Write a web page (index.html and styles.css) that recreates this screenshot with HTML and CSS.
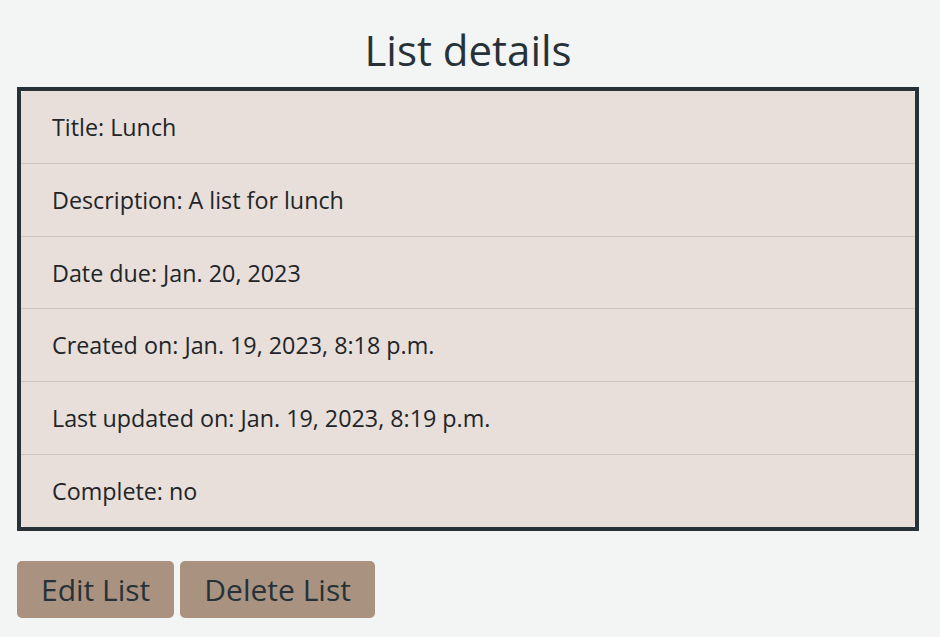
FILE: index.html
```html
<!DOCTYPE html>
<html lang="en">
<head>
<meta charset="utf-8">
<title>List details</title>
<link rel="stylesheet" href="styles.css">
</head>
<body>
<main class="page">
  <h1 class="page-title">List details</h1>
  <div class="details-frame">
    <ul class="details-list">
      <li class="details-item">Title: Lunch</li>
      <li class="details-item">Description: A list for lunch</li>
      <li class="details-item">Date due: Jan. 20, 2023</li>
      <li class="details-item">Created on: Jan. 19, 2023, 8:18 p.m.</li>
      <li class="details-item">Last updated on: Jan. 19, 2023, 8:19 p.m.</li>
      <li class="details-item">Complete: no</li>
    </ul>
  </div>
  <div class="actions">
    <a class="btn" href="#">Edit List</a>
    <a class="btn" href="#">Delete List</a>
  </div>
</main>
</body>
</html>
```

FILE: styles.css
```css
* { box-sizing: border-box; }

html, body {
  margin: 0;
  padding: 0;
  background: #f3f4f4;
}

body {
  font-family: "Open Sans", "Noto Sans", sans-serif;
  color: #212529;
}

.page {
  padding: 0 21px 0 17px;
}

.page-title {
  margin: 25px 0 13px;
  font-size: 42px;
  line-height: 49px;
  font-weight: 400;
  text-align: center;
  color: #263238;
}

.details-frame {
  border: 4px solid #263238;
}

.details-list {
  list-style: none;
  margin: 0;
  padding: 0;
  height: 436px;
  display: flex;
  flex-direction: column;
  background: #e8dfda;
  border-radius: 4px;
}

.details-item {
  flex: 1;
  display: flex;
  align-items: center;
  padding: 0 31px;
  font-size: 23.3px;
  line-height: 34px;
  border-top: 1px solid #cbc4bf;
}

.details-item:first-child {
  border-top: none;
}

.actions {
  display: flex;
  gap: 6px;
  margin-top: 30px;
}

.btn {
  display: block;
  height: 57px;
  line-height: 57px;
  padding: 0 24px;
  background: #a99380;
  color: #263238;
  border-radius: 5px;
  font-size: 30px;
  text-decoration: none;
}
```
